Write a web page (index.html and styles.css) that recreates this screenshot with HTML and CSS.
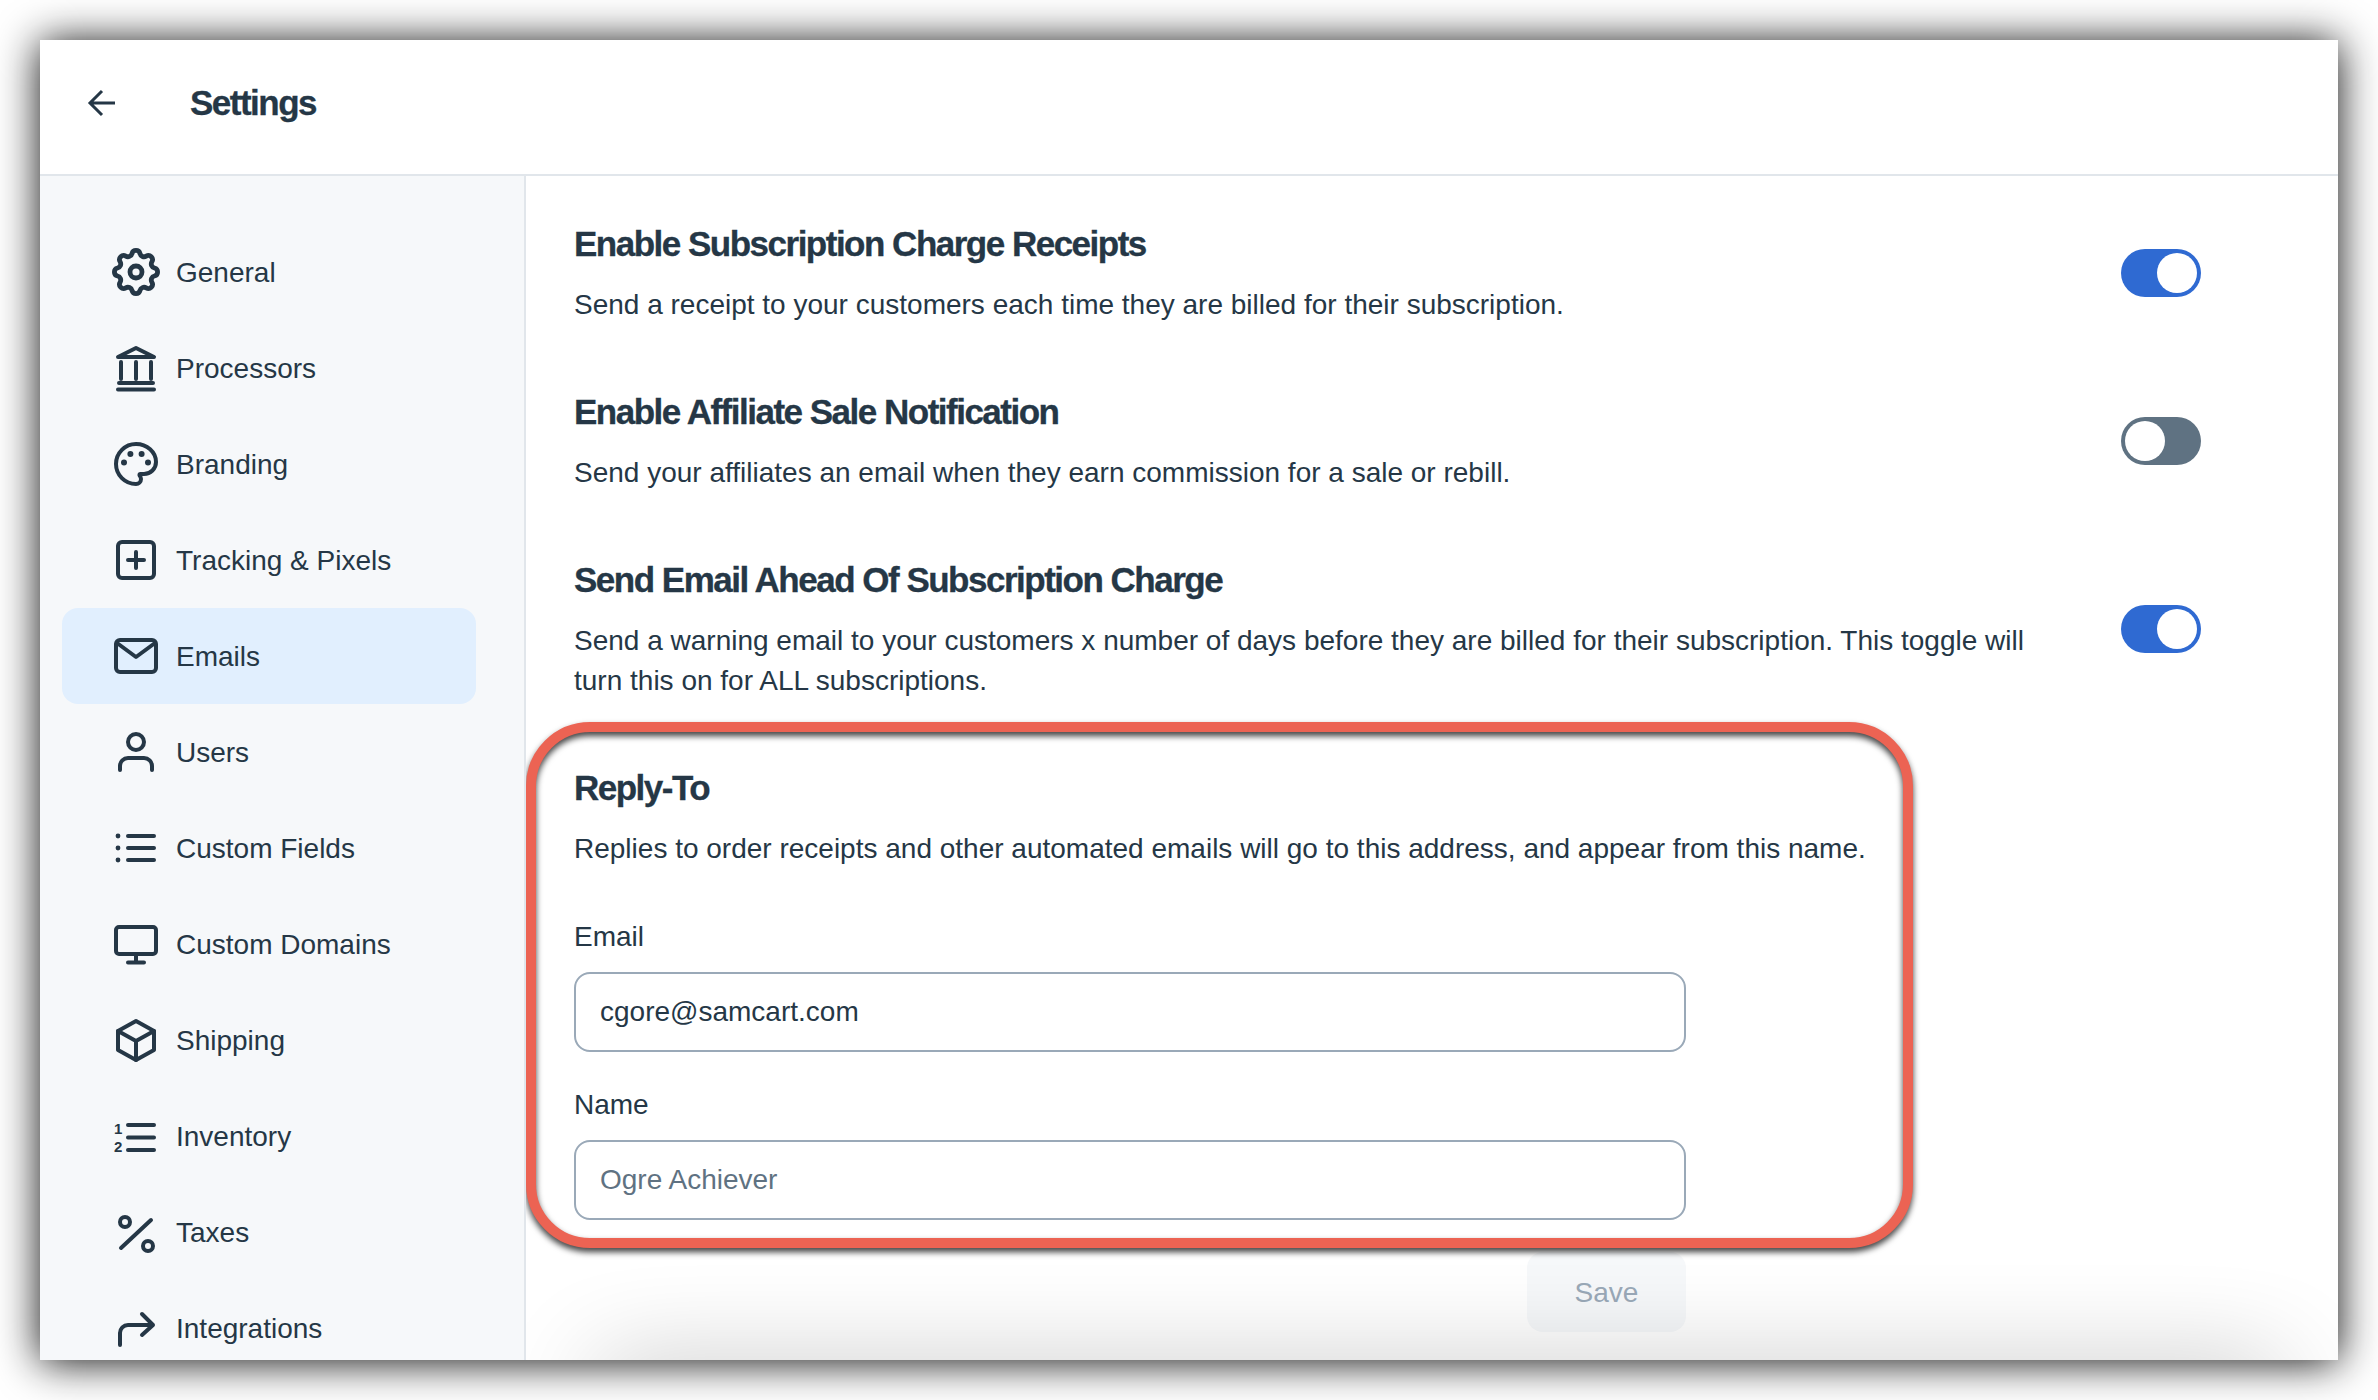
FILE: index.html
```html
<!DOCTYPE html>
<html lang="en">
<head>
<meta charset="UTF-8">
<meta name="viewport" content="width=device-width, initial-scale=1.0">
<title>Settings</title>
<link rel="stylesheet" href="styles.css">
</head>
<body>

<div class="window">
    <header class="topbar">
        <svg class="back" viewBox="0 0 32 32"><path d="M29 16H4M16 4L4 16l12 12"/></svg>
        <h1>Settings</h1>
    </header>

    <div class="columns">
        <nav class="sidebar">
            <a class="item"><svg class="icon" viewBox="2 2 20 20"><path d="M10.325 4.317c.426-1.756 2.924-1.756 3.35 0a1.724 1.724 0 002.573 1.066c1.543-.94 3.31.826 2.37 2.37a1.724 1.724 0 001.065 2.572c1.756.426 1.756 2.924 0 3.35a1.724 1.724 0 00-1.066 2.573c.94 1.543-.826 3.31-2.37 2.37a1.724 1.724 0 00-2.572 1.065c-.426 1.756-2.924 1.756-3.35 0a1.724 1.724 0 00-2.573-1.066c-1.543.94-3.31-.826-2.37-2.37a1.724 1.724 0 00-1.065-2.572c-1.756-.426-1.756-2.924 0-3.35a1.724 1.724 0 001.066-2.573c-.94-1.543.826-3.31 2.37-2.37.996.608 2.296.07 2.572-1.065z"/><circle cx="12" cy="12" r="2.5"/></svg><span>General</span></a>
            <a class="item"><svg class="icon" viewBox="0 0 24 24"><path d="M3 6.500L12 2l9 4.500z"/><path d="M4.500 9v8.500M12 9v8.500M19.500 9v8.500M3.500 19.500h17M3 22.700h18"/></svg><span>Processors</span></a>
            <a class="item"><svg class="icon" viewBox="0 0 24 24"><path d="M12 22C6.490 22 2 17.510 2 12S6.490 2 12 2s10 4.040 10 9c0 3.310-2.690 6-6 6h-1.770c-.28 0-.5.22-.5.5 0 .12.05.23.13.33.41.47.64 1.060.64 1.670A2.500 2.500 0 0 1 12 22z"/><circle class="dot" cx="6" cy="11.300" r="1.500"/><circle class="dot" cx="9.200" cy="7" r="1.500"/><circle class="dot" cx="14.800" cy="7" r="1.500"/><circle class="dot" cx="18" cy="11.300" r="1.500"/></svg><span>Branding</span></a>
            <a class="item"><svg class="icon" viewBox="0 0 24 24"><rect x="3" y="3" width="18" height="18" rx="2"/><path d="M12 8v8M8 12h8"/></svg><span>Tracking &amp; Pixels</span></a>
            <a class="item active"><svg class="icon" viewBox="0 0 24 24"><rect x="2" y="4" width="20" height="16" rx="2"/><path d="M2.500 5.500L12 12.500l9.500-7"/></svg><span>Emails</span></a>
            <a class="item"><svg class="icon" viewBox="0 0 24 24"><circle cx="12" cy="7" r="4"/><path d="M4 21v-2a4 4 0 0 1 4-4h8a4 4 0 0 1 4 4v2"/></svg><span>Users</span></a>
            <a class="item"><svg class="icon" viewBox="0 0 24 24"><path d="M8 6h13M8 12h13M8 18h13"/><circle class="dot" cx="3" cy="6" r="1.200"/><circle class="dot" cx="3" cy="12" r="1.200"/><circle class="dot" cx="3" cy="18" r="1.200"/></svg><span>Custom Fields</span></a>
            <a class="item"><svg class="icon" viewBox="0 0 24 24"><rect x="2" y="3.500" width="20" height="13.500" rx="1.500"/><path d="M12 17v4M8 21.300h8"/></svg><span>Custom Domains</span></a>
            <a class="item"><svg class="icon" viewBox="0 0 24 24"><path d="M12 2.500L21 7.500v9.500l-9 5-9-5V7.500z"/><path d="M3 7.500l9 5 9-5M12 12.500V22"/></svg><span>Shipping</span></a>
            <a class="item"><svg class="icon" viewBox="0 0 24 24"><path d="M8 6.500h13M8 12.800h13M8 19h13"/><text class="num" x="1" y="11">1</text><text class="num" x="1" y="20">2</text></svg><span>Inventory</span></a>
            <a class="item"><svg class="icon" viewBox="0 0 24 24"><circle cx="6.500" cy="7" r="2.500"/><circle cx="18" cy="19" r="2.500"/><path d="M4.500 20L19.500 6"/></svg><span>Taxes</span></a>
            <a class="item"><svg class="icon" viewBox="0 0 24 24"><path d="M4 20.500v-6a4 4 0 0 1 4-4h12.500M15 5l5.500 5.500-5.500 5"/></svg><span>Integrations</span></a>
        </nav>

        <main class="content">
            <section class="row">
                <div class="info">
                    <h2>Enable Subscription Charge Receipts</h2>
                    <p>Send a receipt to your customers each time they are billed for their subscription.</p>
                </div>
                <div class="toggle on"><span></span></div>
            </section>
            <section class="row">
                <div class="info">
                    <h2>Enable Affiliate Sale Notification</h2>
                    <p>Send your affiliates an email when they earn commission for a sale or rebill.</p>
                </div>
                <div class="toggle"><span></span></div>
            </section>
            <section class="row">
                <div class="info">
                    <h2>Send Email Ahead Of Subscription Charge</h2>
                    <p>Send a warning email to your customers x number of days before they are billed for their subscription. This toggle will turn this on for ALL subscriptions.</p>
                </div>
                <div class="toggle on"><span></span></div>
            </section>

            <form class="reply">
                <h2>Reply-To</h2>
                <p>Replies to order receipts and other automated emails will go to this address, and appear from this name.</p>
                <label for="email" class="first">Email</label>
                <input type="text" id="email" value="cgore@samcart.com">
                <label for="name">Name</label>
                <input type="text" id="name" placeholder="Ogre Achiever">
                <button type="button">Save</button>
            </form>

            <div class="highlight"></div>
            <div class="fade"></div>
        </main>
    </div>
</div>

</body>
</html>
```
FILE: styles.css
```css
html, body {
    margin: 0;
    height: 100%;
    overflow: hidden;
}

body {
    box-sizing: border-box;
    padding: 40px;
    background-color: #fff;
    color: #253746;
    font-family: "Liberation Sans", Arial, sans-serif;
    font-size: 28px;
}

.window {
    width: 2298px;
    height: 1320px;
    display: flex;
    flex-direction: column;
    overflow: hidden;
    background-color: #fff;
    box-shadow: 0 2px 40px rgba(0, 0, 0, 0.95);
}

.topbar {
    flex: none;
    box-sizing: border-box;
    height: 136px;
    padding-bottom: 8px;
    display: flex;
    align-items: center;
    border-bottom: 2px solid #e1e6eb;
}

.back {
    width: 32px;
    height: 32px;
    margin-left: 46px;
    fill: none;
    stroke: #253746;
    stroke-width: 3;
}

h1 {
    margin: 0 0 0 72px;
    font-size: 35px;
    letter-spacing: -1.5px;
    -webkit-text-stroke: 0.3px #253746;
}

.columns {
    flex: 1;
    display: flex;
    min-height: 0;
}

.sidebar {
    flex: none;
    box-sizing: border-box;
    width: 486px;
    padding: 48px 48px 0 22px;
    background-color: #f6f8fa;
    border-right: 2px solid #e1e6eb;
}

.item {
    height: 96px;
    display: flex;
    align-items: center;
    gap: 16px;
    padding-left: 50px;
    border-radius: 16px;
}

.item span {
    padding-top: 2px;
}

.active {
    background-color: #e1effe;
}

.icon {
    flex: none;
    width: 48px;
    height: 48px;
    fill: none;
    stroke: #253746;
    stroke-width: 2;
    stroke-linecap: round;
    stroke-linejoin: round;
}

.icon .dot {
    fill: #253746;
    stroke: none;
}

.icon .num {
    fill: #253746;
    stroke: none;
    font-size: 7.500px;
    font-weight: bold;
}

.content {
    flex: 1;
    position: relative;
    overflow: hidden;
    padding: 44px 137px 0 48px;
}

.row {
    display: flex;
    justify-content: space-between;
    align-items: center;
    margin-bottom: 63px;
}

.info {
    width: 1500px;
}

h2 {
    margin: 0;
    font-size: 35px;
    line-height: 48px;
    letter-spacing: -1.5px;
    -webkit-text-stroke: 0.3px #253746;
}

p {
    margin: 17px 0 0;
    line-height: 40px;
}

.toggle {
    box-sizing: border-box;
    width: 80px;
    height: 48px;
    padding: 4px;
    border-radius: 24px;
    background-color: #5f7282;
}

.toggle span {
    display: block;
    width: 40px;
    height: 40px;
    border-radius: 50%;
    background-color: #fff;
}

.toggle.on {
    background-color: #2f6ad2;
    display: flex;
    justify-content: flex-end;
}

.reply {
    width: 1112px;
    display: flex;
    flex-direction: column;
}

.reply p {
    white-space: nowrap;
}

label {
    margin: 33px 0 15px;
    line-height: 40px;
}

label.first {
    margin-top: 48px;
}

input {
    box-sizing: border-box;
    height: 80px;
    padding: 0 24px;
    border: 2px solid #9aa9b8;
    border-radius: 16px;
    color: #253746;
    font-family: "Liberation Sans", Arial, sans-serif;
    font-size: 28px;
}

input::placeholder {
    color: #5f7282;
    opacity: 1;
}

button {
    align-self: flex-end;
    width: 159px;
    height: 80px;
    margin-top: 32px;
    padding-top: 3px;
    border: none;
    border-radius: 16px;
    background-color: #f6f8fa;
    color: #9aa9b8;
    font-family: "Liberation Sans", Arial, sans-serif;
    font-size: 28px;
}

/* red annotation drawn over the reply-to form */
.highlight {
    position: absolute;
    left: 0;
    top: 546px;
    box-sizing: border-box;
    width: 1387px;
    height: 526px;
    border: 10px solid #ec6353;
    border-radius: 64px;
    filter: drop-shadow(0 4px 3px rgba(0, 0, 0, 0.75));
}

/* soft grey fade at the bottom edge */
.fade {
    position: absolute;
    left: 74px;
    right: 58px;
    bottom: -60px;
    height: 50px;
    box-shadow: 0 0 100px rgba(0, 0, 0, 0.3);
    pointer-events: none;
}
```
